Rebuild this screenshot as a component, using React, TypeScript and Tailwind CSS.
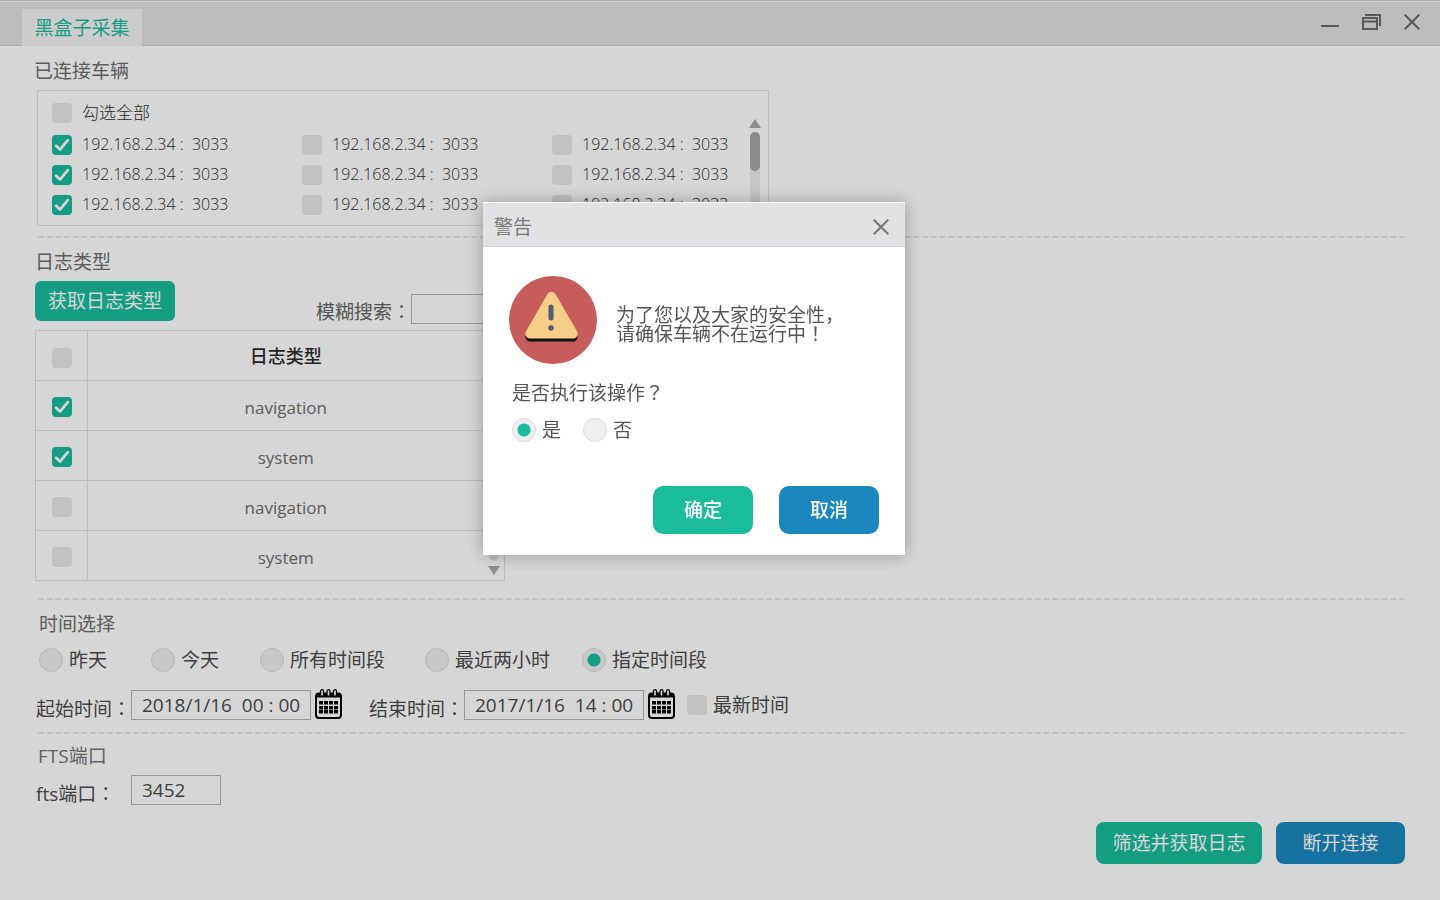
import React from "react";

const FONT =
  "font-['Open_Sans','Noto_Sans_CJK_SC',sans-serif]";

function Mark({ children }: { children: string }) {
  return <span className="font-['Noto_Sans_CJK_TC',sans-serif]">{children}</span>;
}

function Checkbox({ id, label, checked = false }: { id: string; label?: string; checked?: boolean }) {
  return (
    <span className="inline-grid size-5 shrink-0">
      <input
        id={id}
        type="checkbox"
        aria-label={label}
        defaultChecked={checked}
        className="peer col-start-1 row-start-1 size-5 appearance-none rounded bg-[#e7e7e7] checked:bg-[#1abc9c]"
      />
      <svg
        viewBox="0 0 20 20"
        className="pointer-events-none invisible col-start-1 row-start-1 size-5 peer-checked:visible"
        fill="none"
        stroke="#fff"
        strokeWidth="2.8"
        strokeLinecap="round"
        strokeLinejoin="round"
      >
        <path d="M4.2 10.8 8 14.6 15.8 5.2" />
      </svg>
    </span>
  );
}

function Radio({ id, name, checked = false }: { id: string; name: string; checked?: boolean }) {
  return (
    <input
      id={id}
      type="radio"
      name={name}
      defaultChecked={checked}
      className="size-6 shrink-0 appearance-none rounded-full border border-[#dadada] bg-[#efefef] checked:bg-[radial-gradient(circle,#1abc9c_6px,#efefef_7px)]"
    />
  );
}

function Divider() {
  return (
    <svg aria-hidden="true" className="ml-[38px] block h-0.5 w-[calc(100%-73px)]">
      <line x1="0" y1="1" x2="100%" y2="1" stroke="#e8e8e8" strokeWidth="2" strokeDasharray="5.67 3" />
    </svg>
  );
}

function CalendarIcon() {
  return (
    <svg viewBox="0 0 27 30" className="h-[30px] w-[27px]">
      <rect x="1" y="4.500" width="25" height="24.500" rx="3" fill="none" stroke="#000" strokeWidth="2" />
      <path d="M1 8.500V6.500Q1 4 3.500 4H23.500Q26 4 26 6.500V8.500Z" fill="#000" />
      {[7, 13.5, 20].map((x) => (
        <rect key={x} x={x - 1.5} y="0.7" width="3" height="6.500" rx="1.500" fill="#fff" stroke="#000" strokeWidth="1.300" />
      ))}
      {[12, 17, 21].map((y) =>
        [4, 9, 14, 19].map((x) => <rect key={`${x}-${y}`} x={x} y={y} width="4" height="3.500" fill="#000" />)
      )}
    </svg>
  );
}

function Cross() {
  return (
    <svg viewBox="0 0 16 16" className="size-4" fill="none" stroke="currentColor" strokeWidth="2">
      <path d="M.7.7 15.300 15.300M15.300.7.7 15.300" />
    </svg>
  );
}

const hosts = [
  [true, false, false],
  [true, false, false],
  [true, false, false],
];

const logs = [
  { name: "navigation", checked: true },
  { name: "system", checked: true },
  { name: "navigation", checked: false },
  { name: "system", checked: false },
];

const ranges = ["昨天", "今天", "所有时间段", "最近两小时", "指定时间段"];

function TitleBar() {
  return (
    <header className="flex h-[46px] items-end justify-between border-t border-b border-t-[#d0d0d0] border-b-[#cecece] bg-[#e2e2e4] pr-5 pl-[22px] shadow-[inset_0_1px_0_#f5f5f5]">
      <div className="-mb-px flex h-[37px] w-[120px] items-center justify-center bg-[#f4f4f4] text-[#1abc9c]">
        黑盒子采集
      </div>
      <div className="flex h-full items-start gap-[23px] pt-[13px] text-[#6b6b6b]">
        <button type="button" aria-label="最小化">
          <svg viewBox="0 0 18 16" className="h-4 w-[18px]">
            <rect y="11" width="18" height="2" fill="currentColor" />
          </svg>
        </button>
        <button type="button" aria-label="还原">
          <svg viewBox="0 0 19 16" className="h-4 w-[19px]" fill="none" stroke="currentColor" strokeWidth="2">
            <path d="M1 4H15V15H1ZM1 7.500H15M3 1H18V12" />
          </svg>
        </button>
        <button type="button" aria-label="关闭">
          <Cross />
        </button>
      </div>
    </header>
  );
}

function Vehicles() {
  return (
    <section>
      <h2 className="ml-[34px] pt-[13px] leading-6 text-[#6e6e6e]">已连接车辆</h2>
      <div className="mt-[7px] ml-[37px] flex w-[732px] max-w-full justify-between border border-[#e0e0e0] pr-[7px] pb-[5px] pl-[14px] text-[#303030]">
        <div className="pt-3">
          <label htmlFor="all" className="flex h-5 items-center gap-2.5 text-[17px] font-light">
            <Checkbox id="all" />
            勾选全部
          </label>
          <div className="mt-[7px] grid grid-cols-[250px_250px_auto]">
            {hosts.flatMap((row, r) =>
              row.map((on, c) => (
                <label key={`${r}-${c}`} htmlFor={`host-${r}-${c}`} className="flex h-[30px] items-center gap-2.5 text-base font-light">
                  <Checkbox id={`host-${r}-${c}`} checked={on} />
                  <span className="pb-0.5 whitespace-pre">{"192.168.2.34 :  3033"}</span>
                </label>
              ))
            )}
          </div>
        </div>
        <div className="flex flex-col items-center gap-1 pt-7">
          <svg viewBox="0 0 12 9" className="h-[9px] w-3" fill="#a9a9a9">
            <path d="M6 0 12 9H0Z" />
          </svg>
          <div className="w-2.5 flex-1 rounded-full bg-[#ededed]">
            <div className="h-[39px] rounded-full bg-[#a9a9a9]" />
          </div>
          <svg viewBox="0 0 12 9" className="h-[9px] w-3" fill="#a9a9a9">
            <path d="M6 9 0 0H12Z" />
          </svg>
        </div>
      </div>
    </section>
  );
}

function LogTypes() {
  return (
    <section className="ml-[35px]">
      <h2 className="pt-3 leading-6 text-[#6e6e6e]">日志类型</h2>
      <div className="mt-[7px] flex w-[470px] justify-between">
        <button type="button" className="h-10 w-[140px] rounded-md bg-[#1abc9c] text-white">
          获取日志类型
        </button>
        <div className="mt-[13px] flex items-center">
          <label htmlFor="search" className="pt-1 text-[#666]">
            模糊搜索<Mark>：</Mark>
          </label>
          <input id="search" type="text" className="h-[30px] w-[94px] border border-[#b5b5b5] px-2 outline-none" />
        </div>
      </div>
      <div className="mt-[6px] flex w-[470px] border border-[#e0e0e0]">
        <table className="flex-1 border-collapse">
          <thead>
            <tr className="h-[49px] border-b border-[#e0e0e0]">
              <th className="w-[51px] border-r border-[#e0e0e0]">
                <span className="flex justify-center pt-1.5 pl-0.5">
                  <Checkbox id="log-all" label="全选" />
                </span>
              </th>
              <th className="pt-0.5 text-lg font-medium text-[#2c2c2c]">日志类型</th>
            </tr>
          </thead>
          <tbody>
            {logs.map((log, i) => (
              <tr key={i} className="h-[50px] border-b border-[#e0e0e0] last:border-b-0">
                <td className="border-r border-[#e0e0e0]">
                  <span className="flex justify-center pt-1 pl-0.5">
                    <Checkbox id={`log-${i}`} label={log.name} checked={log.checked} />
                  </span>
                </td>
                <td className="pt-1.5 text-center text-[17px] text-[#6e6e6e]">{log.name}</td>
              </tr>
            ))}
          </tbody>
        </table>
        <div className="flex w-5 flex-col items-center gap-[5px] py-[5px]">
          <svg viewBox="0 0 12 9" className="h-[9px] w-3" fill="#a9a9a9">
            <path d="M6 0 12 9H0Z" />
          </svg>
          <div className="w-2.5 flex-1 rounded-full bg-[#e3e3e3]" />
          <svg viewBox="0 0 12 9" className="h-[9px] w-3" fill="#a9a9a9">
            <path d="M6 9 0 0H12Z" />
          </svg>
        </div>
      </div>
    </section>
  );
}

function TimeField({ id, label, value }: { id: string; label: string; value: string }) {
  return (
    <div className="flex h-[30px] items-center">
      <label htmlFor={id} className="w-[95px] pt-1.5 whitespace-nowrap">
        {label}
        <Mark>：</Mark>
      </label>
      <input
        id={id}
        type="text"
        defaultValue={value}
        className="h-[30px] w-[180px] border border-[#b5b5b5] px-2.5 outline-none"
      />
      <button type="button" aria-label={`选择${label}`} className="-mt-0.5 ml-1">
        <CalendarIcon />
      </button>
    </div>
  );
}

function TimeSelect() {
  return (
    <section className="text-[#4c4c4c]">
      <h2 className="ml-[39px] pt-3 leading-6 text-[#6e6e6e]">时间选择</h2>
      <div className="mt-3 ml-[39px] grid grid-cols-[112px_109px_165px_157px_auto] justify-start">
        {ranges.map((text, i) => (
          <label key={text} htmlFor={`range-${i}`} className="flex h-6 items-center gap-1.5">
            <Radio id={`range-${i}`} name="range" checked={i === 4} />
            {text}
          </label>
        ))}
      </div>
      <div className="mt-[18px] ml-[36px] flex items-center">
        <TimeField id="start" label="起始时间" value="2018/1/16  00 : 00" />
        <div className="ml-[27px]">
          <TimeField id="end" label="结束时间" value="2017/1/16  14 : 00" />
        </div>
        <label htmlFor="latest" className="ml-3 flex items-center gap-1.5">
          <Checkbox id="latest" />
          最新时间
        </label>
      </div>
    </section>
  );
}

function Port() {
  return (
    <section className="text-[#4c4c4c]">
      <h2 className="ml-[38px] pt-2.5 leading-6 text-[#757575]">FTS端口</h2>
      <div className="mt-[7px] ml-[36px] flex h-[30px] items-center">
        <label htmlFor="port" className="w-[95px] pt-1.5 whitespace-nowrap">
          fts端口<Mark>：</Mark>
        </label>
        <input id="port" type="text" defaultValue="3452" className="h-[30px] w-[90px] border border-[#b5b5b5] px-2.5 outline-none" />
      </div>
    </section>
  );
}

function WarningIcon() {
  return (
    <svg viewBox="0 0 88 88" className="size-[88px] shrink-0">
      <circle cx="44" cy="44" r="44" fill="#c75c5c" />
      <path d="M42.500 24 64 61H21Z" fill="#111" stroke="#111" strokeWidth="9" strokeLinejoin="round" />
      <path d="M42.500 20.500 64 57.800H21Z" fill="#f5cf87" stroke="#f5cf87" strokeWidth="9.500" strokeLinejoin="round" />
      <rect x="39.500" y="28.500" width="5" height="16" rx="2.500" fill="#4f5d73" />
      <circle cx="42" cy="52" r="2.800" fill="#4f5d73" />
    </svg>
  );
}

function WarningDialog() {
  return (
    <div className="fixed inset-0 flex items-start justify-center bg-black/16 pt-[202px] pr-[52px]">
      <div role="dialog" aria-modal="true" aria-labelledby="dialog-title" className="w-[422px] bg-white shadow-[0_0_16px_rgba(0,0,0,0.3)]">
        <div className="flex h-[45px] items-center justify-between border-t border-b border-t-white border-b-[#d0d0d0] bg-[#e2e2e4] pt-1 pr-4 pl-[11px] text-[#777]">
          <h1 id="dialog-title">警告</h1>
          <button type="button" aria-label="关闭">
            <Cross />
          </button>
        </div>
        <div className="px-[26px] pt-[29px] pb-[21px] text-[#555]">
          <div className="flex items-center gap-[19px]">
            <WarningIcon />
            <div className="pt-[6px] font-['Noto_Sans_CJK_SC',sans-serif] leading-[19px]">
              <p>为了您以及大家的安全性，</p>
              <p className="flex">
                请确保车辆不在运行中<Mark>！</Mark>
              </p>
            </div>
          </div>
          <fieldset className="ml-[3px]">
            <legend className="pt-4 leading-6">
              是否执行该操作<Mark>？</Mark>
            </legend>
            <div className="mt-[13px] flex gap-[22px]">
              <label htmlFor="run-yes" className="flex items-center gap-1.5">
                <Radio id="run-yes" name="run" checked />是
              </label>
              <label htmlFor="run-no" className="flex items-center gap-1.5">
                <Radio id="run-no" name="run" />否
              </label>
            </div>
          </fieldset>
          <div className="mt-11 flex justify-end gap-[26px] text-white">
            <button type="button" className="h-12 w-[100px] rounded-[10px] bg-[#1abc9c] font-medium">
              确定
            </button>
            <button type="button" className="h-12 w-[100px] rounded-[10px] bg-[#1a88be] font-medium">
              取消
            </button>
          </div>
        </div>
      </div>
    </div>
  );
}

export default function App() {
  return (
    <div className={`min-h-screen bg-white text-[19px] leading-6 ${FONT}`}>
      <TitleBar />
      <main>
        <Vehicles />
        <div className="pt-2.5">
          <Divider />
        </div>
        <LogTypes />
        <div className="pt-[17px]">
          <Divider />
        </div>
        <TimeSelect />
        <div className="pt-3">
          <Divider />
        </div>
        <Port />
        <div className="mt-[17px] mr-[35px] flex justify-end gap-[14px] text-white">
          <button type="button" className="h-[42px] w-[166px] rounded-lg bg-[#1abc9c]">
            筛选并获取日志
          </button>
          <button type="button" className="h-[42px] w-[129px] rounded-lg bg-[#1a88be]">
            断开连接
          </button>
        </div>
      </main>
      <WarningDialog />
    </div>
  );
}
